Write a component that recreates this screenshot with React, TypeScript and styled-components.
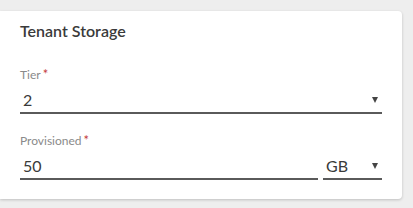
import React, { FC } from 'react';
import styled, { createGlobalStyle } from 'styled-components';

const GlobalStyle = createGlobalStyle`
  html, body {
    margin: 0;
    padding: 0;
    background: #eeeeee;
    font-family: Lato, 'Open Sans', sans-serif;
  }
`;

const Page = styled.div`
  padding: 11px 11px 9px 0;
`;

const Card = styled.div`
  width: 402px;
  height: 188px;
  box-sizing: border-box;
  padding: 10px 20px 0 20px;
  background: #fff;
  border-radius: 0 4px 4px 0;
  box-shadow: 0 1px 3px rgba(0, 0, 0, 0.2);
  display: flex;
  flex-direction: column;
`;

const Title = styled.div`
  font-size: 16px;
  line-height: 20px;
  font-weight: 600;
  color: #3a3a3a;
  margin-bottom: 26px;
`;

const Field = styled.div`
  display: flex;
  flex-direction: column;
  & + & {
    margin-top: 19px;
  }
`;

const Label = styled.div`
  font-size: 12px;
  line-height: 15px;
  color: #8a8a8a;
  .req {
    color: #c33b3b;
    margin-left: 2px;
    font-size: 13px;
  }
`;

const Row = styled.div`
  display: flex;
  gap: 5px;
`;

const Control = styled.div<{ $width?: number }>`
  display: flex;
  align-items: flex-end;
  justify-content: space-between;
  height: 28px;
  padding: 0 4px 2px 3px;
  border-bottom: 2px solid #5a5a5a;
  font-size: 16px;
  line-height: 20px;
  color: #3a3a3a;
  flex: ${(p) => (p.$width ? `0 0 ${p.$width}px` : '1 1 auto')};
  box-sizing: content-box;
`;

const Arrow = styled.span`
  width: 0;
  height: 0;
  border-left: 3.5px solid transparent;
  border-right: 3.5px solid transparent;
  border-top: 6px solid #444;
  margin-bottom: 7px;
`;

const App: FC = () => (
  <>
    <GlobalStyle />
    <Page>
      <Card>
        <Title>Tenant Storage</Title>
        <Field>
          <Label>
            Tier<span className="req">*</span>
          </Label>
          <Row>
            <Control>
              <span>2</span>
              <Arrow />
            </Control>
          </Row>
        </Field>
        <Field>
          <Label>
            Provisioned<span className="req">*</span>
          </Label>
          <Row>
            <Control>
              <span>50</span>
            </Control>
            <Control $width={52}>
              <span>GB</span>
              <Arrow />
            </Control>
          </Row>
        </Field>
      </Card>
    </Page>
  </>
);

export default App;
